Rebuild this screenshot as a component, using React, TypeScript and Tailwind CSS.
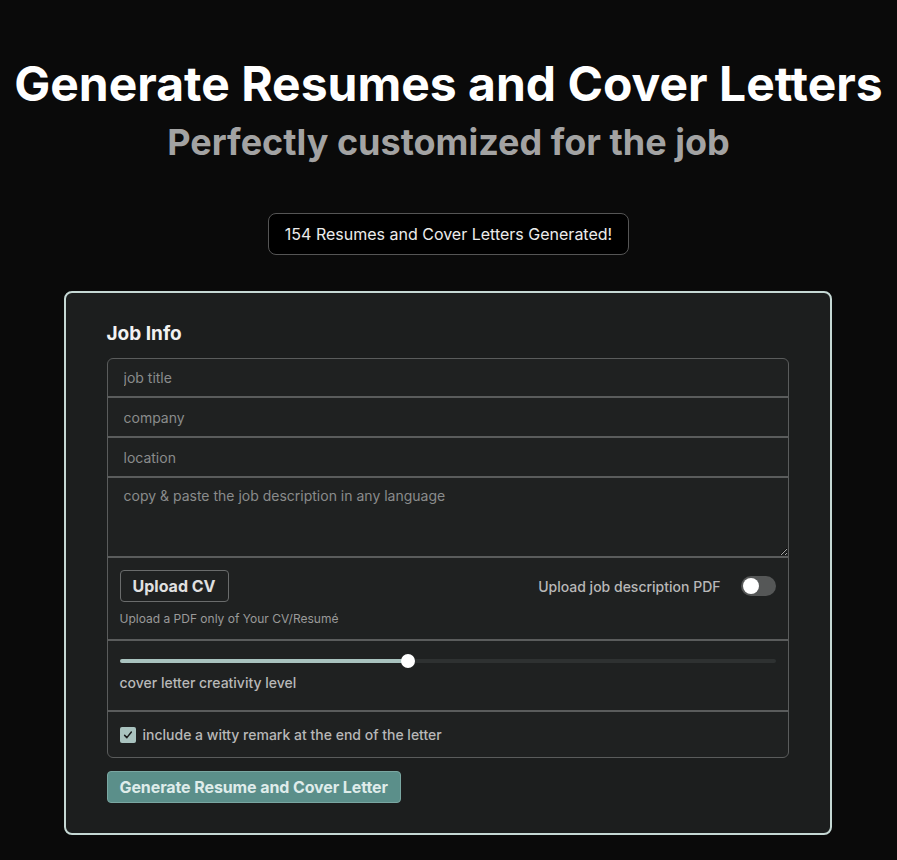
import React from "react";

export default function App() {
  const inter = { fontFamily: "Inter, 'Noto Sans', sans-serif" };
  return (
    <div className="min-h-[860px] w-full bg-[#0a0a0a] text-white" style={inter}>
      <div className="flex flex-col items-center pt-[60px]">
        <h1 className="text-[48px] leading-[48px] font-bold text-white">
          Generate Resumes and Cover Letters
        </h1>
        <h2 className="mt-[14px] text-[36px] leading-[40px] font-bold text-[#a3a3a3]">
          Perfectly customized for the job
        </h2>
        <div className="mt-[51px] rounded-lg border border-[#555555] bg-black px-4 py-2 text-base leading-6 text-[#ececec]">
          154 Resumes and Cover Letters Generated!
        </div>

        <div className="mt-[36px] mr-[2px] w-[768px] rounded-lg border-2 border-[#c5d8d4] bg-[#1c1e1e] px-[41px] pt-[27px] pb-[30px]">
          <div className="text-[19px] leading-[28px] font-bold text-[#f2f2f2] mb-[10px]">Job Info</div>

          <div className="rounded-md border border-[#5a5c5c] bg-[#1f2121] overflow-hidden">
            <input
              className="block h-[39px] w-full border-b-2 border-[#5a5c5c] bg-transparent px-4 text-[14px] text-[#ddd] placeholder:text-[#8a8c8c] outline-none"
              placeholder="job title"
            />
            <input
              className="block h-[40px] w-full border-b-2 border-[#5a5c5c] bg-transparent px-4 text-[14px] text-[#ddd] placeholder:text-[#8a8c8c] outline-none"
              placeholder="company"
            />
            <input
              className="block h-[40px] w-full border-b-2 border-[#5a5c5c] bg-transparent px-4 text-[14px] text-[#ddd] placeholder:text-[#8a8c8c] outline-none"
              placeholder="location"
            />
            <textarea
              className="block h-[80px] w-full border-b-2 border-[#5a5c5c] bg-transparent px-4 pt-[8px] text-[14px] leading-5 text-[#ddd] placeholder:text-[#8a8c8c] outline-none"
              placeholder="copy & paste the job description in any language"
            />

            <div className="flex flex-col border-b-2 border-[#5a5c5c] px-[12px] pt-[12px] pb-[12px]">
              <div className="flex items-center justify-between">
                <button className="h-[32px] rounded-[4px] border border-[#6a6c6c] px-[12px] text-[16px] font-bold text-[#e0e0e0]">
                  Upload CV
                </button>
                <div className="flex items-center gap-[20px]">
                  <span className="text-[14px] font-medium text-[#b8b8b8]">Upload job description PDF</span>
                  <div className="flex h-[20px] w-[35px] items-center rounded-full bg-[#555757] px-[2px]">
                    <div className="h-[16px] w-[16px] rounded-full bg-white" />
                  </div>
                </div>
              </div>
              <div className="mt-[9px] text-[12px] leading-4 text-[#9a9a9a]">Upload a PDF only of Your CV/Resumé</div>
            </div>

            <div className="border-b-2 border-[#5a5c5c] px-[12px] pt-[13px] pb-[17px]">
              <div className="relative h-[14px] w-full">
                <div className="absolute left-0 right-0 top-[5px] h-[4px] rounded-full bg-[#2e3131]" />
                <div className="absolute left-0 top-[5px] h-[4px] rounded-full bg-[#a9c3bf]" style={{ width: "44%" }} />
                <div
                  className="absolute top-0 h-[14px] w-[14px] -translate-x-1/2 rounded-full bg-white"
                  style={{ left: "44%" }}
                />
              </div>
              <div className="mt-[5px] text-[14px] leading-5 font-medium text-[#b8b8b8]">cover letter creativity level</div>
            </div>

            <div className="flex items-center gap-[7px] px-[12px] h-[45px]">
              <div className="flex h-[16px] w-[16px] items-center justify-center rounded-[2px] bg-[#a9c3bf]">
                <svg viewBox="0 0 16 16" className="h-[12px] w-[12px]">
                  <path d="M3.5 8.5 L6.5 11.5 L12.5 4" fill="none" stroke="#1a1c1c" strokeWidth="2" strokeLinecap="round" strokeLinejoin="round" />
                </svg>
              </div>
              <span className="text-[14px] font-medium text-[#b8b8b8]">include a witty remark at the end of the letter</span>
            </div>
          </div>

          <button className="mt-[13px] h-[32px] rounded-[4px] border border-[#7aa7a2] bg-[#5b8f8a] px-[12px] text-[16px] font-bold tracking-[-0.1px] text-[#dfecea]">
            Generate Resume and Cover Letter
          </button>
        </div>
      </div>
    </div>
  );
}
